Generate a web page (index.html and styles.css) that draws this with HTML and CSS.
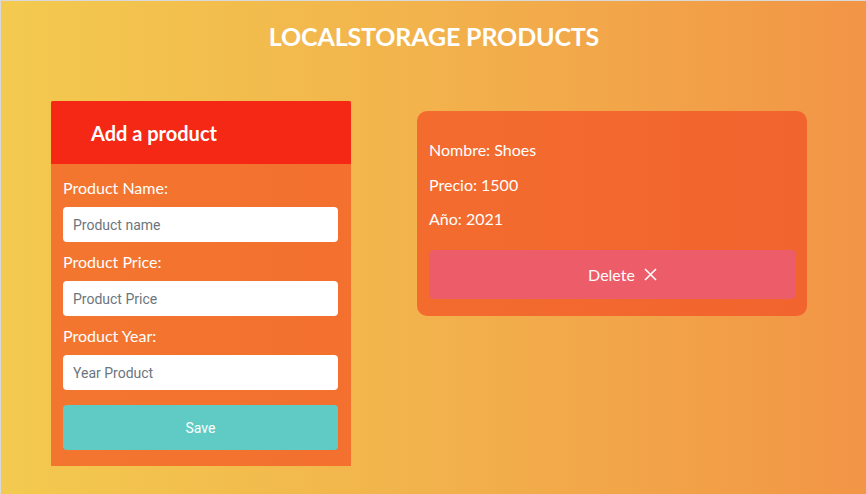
FILE: index.html
```html
<!DOCTYPE html>
<html>
<head>
<meta charset="utf-8">
<link rel="stylesheet" href="styles.css">
</head>
<body>
<div class="page">
  <h1 class="title">LOCALSTORAGE PRODUCTS</h1>
  <div class="main">
    <div class="form-card">
      <div class="form-head">Add a product</div>
      <form class="form-body">
        <label class="label">Product Name:</label>
        <input class="input" type="text" placeholder="Product name">
        <label class="label">Product Price:</label>
        <input class="input" type="text" placeholder="Product Price">
        <label class="label">Product Year:</label>
        <input class="input" type="text" placeholder="Year Product">
        <button class="save" type="button">Save</button>
      </form>
    </div>
    <div class="product">
      <p class="line">Nombre: Shoes</p>
      <p class="line">Precio: 1500</p>
      <p class="line">Año: 2021</p>
      <button class="delete" type="button">Delete
        <svg class="x" width="13" height="13" viewBox="0 0 13 13"><path d="M1 1 L12 12 M12 1 L1 12" stroke="#fff" stroke-width="1.6" fill="none"/></svg>
      </button>
    </div>
  </div>
</div>
</body>
</html>
```
FILE: styles.css
```css
* { box-sizing: border-box; }
html, body { margin: 0; padding: 0; }
body {
  font-family: "Lato", "Liberation Sans", sans-serif;
  color: #fff;
}
.page {
  width: 866px;
  height: 494px;
  background: linear-gradient(90deg, #f3ca4f 0%, #f2b24c 50%, #f29546 100%);
  border-top: 1px solid #d9d9d9;
  border-left: 1px solid #d9d9d9;
  overflow: hidden;
}
.title {
  margin: 0;
  padding-top: 21px;
  text-align: center;
  font-size: 25px;
  line-height: 29px;
  font-weight: 700;
  letter-spacing: -0.15px;
  padding-left: 1px;
}
.main {
  display: flex;
  align-items: flex-start;
  gap: 66px;
  padding-left: 50px;
  margin-top: 50px;
}
.form-card {
  width: 300px;
  background: linear-gradient(90deg, #f3762f, #f3702e);
  border-radius: 2px 2px 0 0;
}
.form-head {
  background: #f42814;
  height: 63px;
  border-radius: 2px 2px 0 0;
  padding-left: 40px;
  font-size: 20px;
  font-weight: 700;
  line-height: 65px;
}
.form-body {
  display: flex;
  flex-direction: column;
  padding: 12px 13px 16px 12px;
  margin: 0;
}
.label {
  font-size: 16px;
  line-height: 24px;
  margin-bottom: 7px;
}
.input {
  height: 35px;
  border: none;
  border-radius: 4px;
  background: #fff;
  padding: 0 10px;
  font-family: "Roboto", "Liberation Sans", sans-serif;
  font-size: 14px;
  margin: 0 0 8px 0;
  outline: none;
}
.input::placeholder { color: #6c757d; }
.input:last-of-type { margin-bottom: 15px; }
.save {
  height: 45px;
  border: none;
  border-radius: 4px;
  background: #5fcbc4;
  color: #fff;
  font-family: "Roboto", "Liberation Sans", sans-serif;
  font-size: 14px;
  font-weight: 400;
  padding: 0;
}
.product {
  width: 390px;
  margin-top: 10px;
  background: linear-gradient(90deg, #f36c2e, #f2642e);
  border-radius: 10px;
  padding: 27px 11px 17px 12px;
  display: flex;
  flex-direction: column;
}
.line {
  margin: 0 0 10.5px 0;
  font-size: 16px;
  line-height: 24px;
}
.line:nth-of-type(3) { margin-bottom: 19px; }
.delete {
  height: 49px;
  border: none;
  border-radius: 5px;
  background: #ec5c69;
  color: #fff;
  font-family: "Lato", "Liberation Sans", sans-serif;
  font-size: 16px;
  display: flex;
  align-items: center;
  justify-content: center;
  gap: 9px;
  padding: 0 0 0 20px;
}
.x { display: block; }
```
